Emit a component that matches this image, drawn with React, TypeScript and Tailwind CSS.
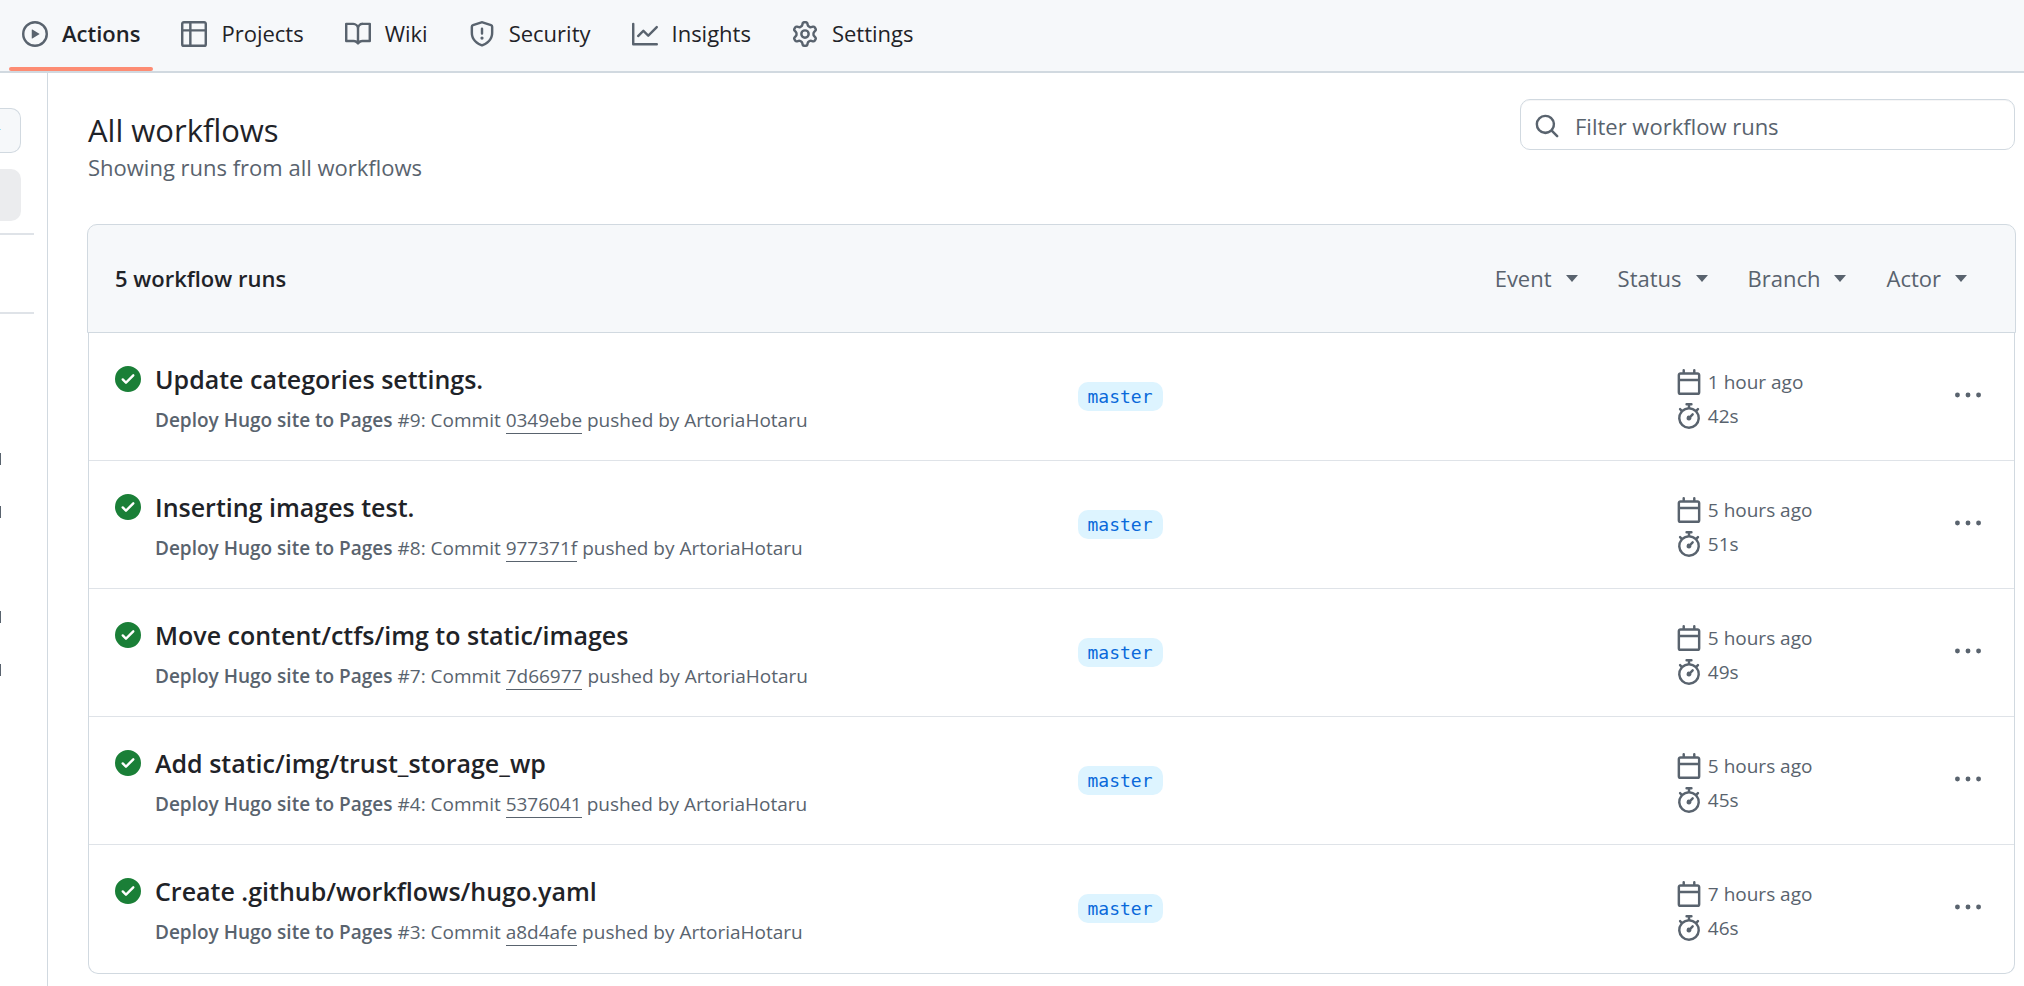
import type { ReactNode } from 'react';

const icons = {
  play: 'M8 0a8 8 0 1 1 0 16A8 8 0 0 1 8 0ZM1.5 8a6.5 6.5 0 1 0 13 0 6.5 6.5 0 0 0-13 0Zm4.879-2.773 4.264 2.559a.25.25 0 0 1 0 .428l-4.264 2.559A.25.25 0 0 1 6 10.559V5.442a.25.25 0 0 1 .379-.215Z',
  table:
    'M0 1.75C0 .784.784 0 1.75 0h12.5C15.216 0 16 .784 16 1.75v12.5A1.75 1.75 0 0 1 14.25 16H1.75A1.75 1.75 0 0 1 0 14.25ZM6.5 6.5v8h7.75a.25.25 0 0 0 .25-.25V6.5Zm8-1.5V1.75a.25.25 0 0 0-.25-.25H6.5V5Zm-13 1.5v7.75c0 .138.112.25.25.25H5v-8ZM5 5V1.5H1.75a.25.25 0 0 0-.25.25V5Z',
  book: 'M0 1.75A.75.75 0 0 1 .75 1h4.253c1.227 0 2.317.59 3 1.501A3.743 3.743 0 0 1 11.006 1h4.245a.75.75 0 0 1 .75.75v10.5a.75.75 0 0 1-.75.75h-4.507a2.25 2.25 0 0 0-1.591.659l-.622.621a.75.75 0 0 1-1.06 0l-.622-.621A2.25 2.25 0 0 0 5.258 13H.75a.75.75 0 0 1-.75-.75Zm7.251 10.324.004-5.073-.002-2.253A2.25 2.25 0 0 0 5.003 2.5H1.5v9h3.757a3.75 3.75 0 0 1 1.994.574ZM8.755 4.75l-.004 7.322a3.752 3.752 0 0 1 1.992-.572H14.5v-9h-3.495a2.25 2.25 0 0 0-2.25 2.25Z',
  shield:
    'M7.467.133a1.748 1.748 0 0 1 1.066 0l5.25 1.68A1.75 1.75 0 0 1 15 3.48V7c0 1.566-.32 3.182-1.303 4.682-.983 1.498-2.585 2.813-5.032 3.855a1.697 1.697 0 0 1-1.33 0c-2.447-1.042-4.049-2.357-5.032-3.855C1.32 10.182 1 8.566 1 7V3.48a1.75 1.75 0 0 1 1.217-1.667Zm.61 1.429a.25.25 0 0 0-.153 0l-5.25 1.68a.25.25 0 0 0-.174.238V7c0 1.358.275 2.666 1.057 3.86.784 1.194 2.121 2.34 4.366 3.297a.196.196 0 0 0 .154 0c2.245-.956 3.582-2.104 4.366-3.298C13.225 9.666 13.5 8.36 13.5 7V3.48a.251.251 0 0 0-.174-.237l-5.25-1.68ZM8.75 4.75v3a.75.75 0 0 1-1.5 0v-3a.75.75 0 0 1 1.5 0ZM9 10.5a1 1 0 1 1-2 0 1 1 0 0 1 2 0Z',
  graph:
    'M1.5 1.75V13.5h13.75a.75.75 0 0 1 0 1.5H.75a.75.75 0 0 1-.75-.75V1.75a.75.75 0 0 1 1.5 0Zm14.28 2.53-5.25 5.25a.75.75 0 0 1-1.06 0L7 7.06 4.28 9.78a.751.751 0 0 1-1.042-.018.751.751 0 0 1-.018-1.042l3.25-3.25a.75.75 0 0 1 1.06 0L10 7.94l4.72-4.72a.751.751 0 0 1 1.042.018.751.751 0 0 1 .018 1.042Z',
  gear: 'M8 0a8.2 8.2 0 0 1 .701.031C9.444.095 9.99.645 10.16 1.29l.288 1.107c.018.066.079.158.212.224.231.114.454.243.668.386.123.082.233.09.299.071l1.103-.303c.644-.176 1.392.021 1.82.63.27.385.506.792.704 1.218.315.675.111 1.422-.364 1.891l-.814.806c-.049.048-.098.147-.088.294.016.257.016.515 0 .772-.01.147.038.246.088.294l.814.806c.475.469.679 1.216.364 1.891a7.977 7.977 0 0 1-.704 1.217c-.428.61-1.176.807-1.82.63l-1.102-.302c-.067-.019-.177-.011-.3.071a5.909 5.909 0 0 1-.668.386c-.133.066-.194.158-.211.224l-.29 1.106c-.168.646-.715 1.196-1.458 1.26a8.006 8.006 0 0 1-1.402 0c-.743-.064-1.289-.614-1.458-1.26l-.289-1.106c-.018-.066-.079-.158-.212-.224a5.738 5.738 0 0 1-.668-.386c-.123-.082-.233-.09-.299-.071l-1.103.303c-.644.176-1.392-.021-1.82-.63a8.12 8.12 0 0 1-.704-1.218c-.315-.675-.111-1.422.363-1.891l.815-.806c.05-.048.098-.147.088-.294a6.214 6.214 0 0 1 0-.772c.01-.147-.038-.246-.088-.294l-.815-.806C.635 6.045.431 5.298.746 4.623a7.92 7.92 0 0 1 .704-1.217c.428-.61 1.176-.807 1.82-.63l1.102.302c.067.019.177.011.3-.071.214-.143.437-.272.668-.386.133-.066.194-.158.211-.224l.29-1.106C6.009.645 6.556.095 7.299.03 7.53.01 7.764 0 8 0Zm-.571 1.525c-.036.003-.108.036-.137.146l-.289 1.105c-.147.561-.549.967-.998 1.189-.173.086-.34.183-.5.29-.417.278-.97.423-1.529.27l-1.103-.303c-.109-.03-.175.016-.195.045-.22.312-.412.644-.573.99-.014.031-.021.11.059.19l.815.806c.411.406.562.957.53 1.456a4.709 4.709 0 0 0 0 .582c.032.499-.119 1.05-.53 1.456l-.815.806c-.081.08-.073.159-.059.19.162.346.353.677.573.989.02.03.085.076.195.046l1.102-.303c.56-.153 1.113-.008 1.53.27.161.107.328.204.501.29.447.222.85.629.997 1.189l.289 1.105c.029.109.101.143.137.146a6.6 6.6 0 0 0 1.142 0c.036-.003.108-.036.137-.146l.289-1.105c.147-.561.549-.967.998-1.189.173-.086.34-.183.5-.29.417-.278.97-.423 1.529-.27l1.103.303c.109.029.175-.016.195-.045.22-.313.411-.644.573-.99.014-.031.021-.11-.059-.19l-.815-.806c-.411-.406-.562-.957-.53-1.456a4.709 4.709 0 0 0 0-.582c-.032-.499.119-1.05.53-1.456l.815-.806c.081-.08.073-.159.059-.19a6.464 6.464 0 0 0-.573-.989c-.02-.03-.085-.076-.195-.046l-1.102.303c-.56.153-1.113.008-1.53-.27a4.44 4.44 0 0 0-.501-.29c-.447-.222-.85-.629-.997-1.189l-.289-1.105c-.029-.11-.101-.143-.137-.146a6.6 6.6 0 0 0-1.142 0ZM11 8a3 3 0 1 1-6 0 3 3 0 0 1 6 0ZM9.5 8a1.5 1.5 0 1 0-3.001.001A1.5 1.5 0 0 0 9.5 8Z',
  search:
    'M10.68 11.74a6 6 0 0 1-7.922-8.982 6 6 0 0 1 8.982 7.922l3.04 3.04a.749.749 0 0 1-.326 1.275.749.749 0 0 1-.734-.215ZM11.5 7a4.499 4.499 0 1 0-8.997 0A4.499 4.499 0 0 0 11.5 7Z',
  check:
    'M8 16A8 8 0 1 1 8 0a8 8 0 0 1 0 16Zm3.78-9.72a.751.751 0 0 0-.018-1.042.751.751 0 0 0-1.042-.018L6.75 9.19 5.28 7.72a.751.751 0 0 0-1.042.018.751.751 0 0 0-.018 1.042l2 2a.75.75 0 0 0 1.06 0Z',
  calendar:
    'M4.75 0a.75.75 0 0 1 .75.75V2h5V.75a.75.75 0 0 1 1.5 0V2h1.25c.966 0 1.75.784 1.75 1.75v10.5A1.75 1.75 0 0 1 13.25 16H2.75A1.75 1.75 0 0 1 1 14.25V3.75C1 2.784 1.784 2 2.75 2H4V.75A.75.75 0 0 1 4.75 0ZM2.5 7.5v6.75c0 .138.112.25.25.25h10.5a.25.25 0 0 0 .25-.25V7.5Zm10.75-4H2.75a.25.25 0 0 0-.25.25V6h11V3.75a.25.25 0 0 0-.25-.25Z',
  stopwatch:
    'M5.75.75A.75.75 0 0 1 6.5 0h3a.75.75 0 0 1 0 1.5h-.75v1l-.001.041a6.724 6.724 0 0 1 3.464 1.435l.007-.006.75-.75a.749.749 0 0 1 1.275.326.749.749 0 0 1-.215.734l-.75.75-.006.007a6.75 6.75 0 1 1-10.548 0L2.72 5.03l-.75-.75a.751.751 0 0 1 .018-1.042.751.751 0 0 1 1.042-.018l.75.75.007.006A6.72 6.72 0 0 1 7.25 2.541V1.5H6.5a.75.75 0 0 1-.75-.75ZM8 14.5a5.25 5.25 0 1 0-.001-10.501A5.25 5.25 0 0 0 8 14.5Zm.389-6.7 1.33-1.33a.75.75 0 1 1 1.061 1.06L9.45 8.861A1.503 1.503 0 0 1 8 10.75a1.499 1.499 0 1 1 .389-2.95Z',
  kebab:
    'M1.5 9.5a1.5 1.5 0 1 0 0-3 1.5 1.5 0 0 0 0 3ZM8 9.5a1.5 1.5 0 1 0 0-3 1.5 1.5 0 0 0 0 3ZM14.5 9.5a1.5 1.5 0 1 0 0-3 1.5 1.5 0 0 0 0 3Z',
};

type IconName = keyof typeof icons;

function Icon({ name, className = 'text-[#59636e]' }: { name: IconName; className?: string }) {
  return (
    <svg viewBox="0 0 16 16" aria-hidden="true" className={`size-[26px] shrink-0 overflow-visible fill-current ${className}`}>
      <path d={icons[name]} />
    </svg>
  );
}

const tabs: { label: string; icon: IconName; active?: boolean }[] = [
  { label: 'Actions', icon: 'play', active: true },
  { label: 'Projects', icon: 'table' },
  { label: 'Wiki', icon: 'book' },
  { label: 'Security', icon: 'shield' },
  { label: 'Insights', icon: 'graph' },
  { label: 'Settings', icon: 'gear' },
];

const filters = ['Event', 'Status', 'Branch', 'Actor'];

const runs = [
  { title: 'Update categories settings.', number: 9, commit: '0349ebe', age: '1 hour ago', duration: '42s' },
  { title: 'Inserting images test.', number: 8, commit: '977371f', age: '5 hours ago', duration: '51s' },
  { title: 'Move content/ctfs/img to static/images', number: 7, commit: '7d66977', age: '5 hours ago', duration: '49s' },
  { title: 'Add static/img/trust_storage_wp', number: 4, commit: '5376041', age: '5 hours ago', duration: '45s' },
  { title: 'Create .github/workflows/hugo.yaml', number: 3, commit: 'a8d4afe', age: '7 hours ago', duration: '46s' },
];

function RepoNav() {
  return (
    <nav className="border-b-2 border-[#d1d9e0] bg-[#f6f8fa] pl-[9px]">
      <ul className="flex gap-[15px]">
        {tabs.map((tab) => (
          <li key={tab.label} className="flex flex-col">
            <a href="#" className="flex h-[67px] items-center gap-[14px] px-[13px] text-[22px]">
              <Icon name={tab.icon} />
              <span className={tab.active ? 'font-semibold' : ''}>{tab.label}</span>
            </a>
            <span className={`h-1 rounded-full ${tab.active ? 'bg-[#fd8c73]' : ''}`} />
          </li>
        ))}
      </ul>
    </nav>
  );
}

function Sidebar() {
  return (
    <aside className="w-12 shrink-0 border-r border-[#d1d9e0] pt-[35px]">
      <div className="mr-[26px] h-[45px] rounded-r-[10px] border border-l-0 border-[#d1d9e0] bg-[#f6f8fa] pt-5">
        <div className="h-px w-px bg-[#9be0f5]" />
      </div>
      <div className="mt-4 mr-[26px] h-[52px] rounded-r-[10px] bg-[#ebecee]" />
      <div className="mt-3 mr-[13px] h-0.5 bg-[#dfe3e8]" />
      <div className="mt-[77px] mr-[13px] h-0.5 bg-[#dfe3e8]" />
      <div className="mt-[139px] h-3 w-px bg-[#59636e]" />
      <div className="mt-[41px] h-3 w-px bg-[#59636e]" />
      <div className="mt-[93px] h-3 w-px bg-[#59636e]" />
      <div className="mt-[41px] h-3 w-px bg-[#59636e]" />
    </aside>
  );
}

function Meta({ icon, children }: { icon: IconName; children: ReactNode }) {
  return (
    <div className="flex h-[34px] items-center gap-[6px]">
      <Icon name={icon} />
      <span>{children}</span>
    </div>
  );
}

function RunRow({ run }: { run: (typeof runs)[number] }) {
  return (
    <li className="grid h-32 grid-cols-[37fr_23fr_12fr] items-start border-b border-[#dfe3e8] px-[26px] pt-[29px] text-[19px] leading-7 text-[#59636e] last:border-b-0">
      <div className="flex gap-[14px]">
        <span className="pt-1">
          <Icon name="check" className="text-[#1a7f37]" />
        </span>
        <div>
          <a href="#" className="block text-[25px] leading-[34px] font-semibold text-[#1f2328]">
            {run.title}
          </a>
          <p className="pt-[10px]">
            <strong className="font-semibold">Deploy Hugo site to Pages</strong> #{run.number}: Commit{' '}
            <a href="#" className="border-b border-[#59636e]">
              {run.commit}
            </a>{' '}
            pushed by <a href="#">ArtoriaHotaru</a>
          </p>
        </div>
      </div>
      <div className="flex pt-5">
        <a href="#" className="rounded-[10px] bg-[#ddf4ff] px-[10px] font-['DejaVu_Sans_Mono',monospace] text-[18px] leading-[29px] text-[#0969da]">
          master
        </a>
      </div>
      <div className="flex items-start justify-between">
        <div className="pt-[3px]">
          <Meta icon="calendar">{run.age}</Meta>
          <Meta icon="stopwatch">{run.duration}</Meta>
        </div>
        <button type="button" aria-label="Show options" className="mt-3 px-[7px] py-2">
          <Icon name="kebab" />
        </button>
      </div>
    </li>
  );
}

export default function App() {
  return (
    <div className="flex min-h-screen flex-col bg-white font-['Open_Sans',sans-serif] text-[#1f2328]">
      <RepoNav />
      <div className="flex grow">
        <Sidebar />
        <main className="min-w-0 grow pt-[26px] pr-2 pb-3 pl-[39px]">
          <header className="flex h-[125px] items-start justify-between pr-px pl-px">
            <div className="pt-[10px]">
              <h1 className="text-[31px] leading-[42px]">All workflows</h1>
              <p className="text-[22px] leading-8 text-[#59636e]">Showing runs from all workflows</p>
            </div>
            <label className="flex h-[51px] w-[495px] items-center gap-[15px] rounded-[10px] border border-[#d1d9e0] px-[13px] pt-[3px] shadow-[inset_0_1px_0_#1f23280a]">
              <Icon name="search" />
              <input
                type="text"
                aria-label="Filter workflow runs"
                placeholder="Filter workflow runs"
                className="min-w-0 grow bg-transparent text-[22px] outline-none placeholder:text-[#59636e]"
              />
            </label>
          </header>
          <section>
            <div className="flex h-[109px] items-center justify-between rounded-t-[10px] border border-[#d1d9e0] bg-[#f6f8fa] pr-12 pl-[27px] text-[22px]">
              <h2 className="font-semibold">5 workflow runs</h2>
              <div className="flex gap-10 text-[#59636e]">
                {filters.map((filter) => (
                  <button key={filter} type="button" className="flex items-center gap-[14px]">
                    {filter}
                    <svg viewBox="0 0 12 7" aria-hidden="true" className="h-[7px] w-3 fill-current">
                      <path d="M0 0h12L6 7Z" />
                    </svg>
                  </button>
                ))}
              </div>
            </div>
            <ul className="mx-px rounded-b-[10px] border border-t-0 border-[#d1d9e0]">
              {runs.map((run) => (
                <RunRow key={run.number} run={run} />
              ))}
            </ul>
          </section>
        </main>
      </div>
    </div>
  );
}
